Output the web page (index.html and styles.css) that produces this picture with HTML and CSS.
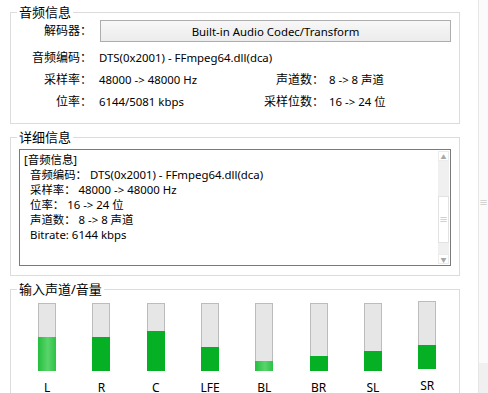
FILE: index.html
```html
<!DOCTYPE html>
<html>
<head>
    <meta charset="utf-8" />
    <title>音频信息</title>
    <link rel="stylesheet" href="styles.css">
</head>
<body>
    <div class="app">
        <div class="main">
            <fieldset class="grp info">
                <legend>音频信息</legend>
                <div class="kv">
                    <span class="k top">解码器：</span>
                    <button class="btn" type="button">Built-in Audio Codec/Transform</button>
                    <span class="k">音频编码：</span>
                    <span class="v wide">DTS(0x2001) - FFmpeg64.dll(dca)</span>
                    <span class="k">采样率：</span>
                    <span class="v">48000 -&gt; 48000 Hz</span>
                    <span class="k2">声道数：</span>
                    <span class="v2">8 -&gt; 8 声道</span>
                    <span class="k">位率：</span>
                    <span class="v">6144/5081 kbps</span>
                    <span class="k2">采样位数：</span>
                    <span class="v2">16 -&gt; 24 位</span>
                </div>
            </fieldset>

            <fieldset class="grp detail">
                <legend>详细信息</legend>
                <div class="memo">
                    <div class="memo-text">
                        <div>[音频信息]</div>
                        <div class="in">音频编码： DTS(0x2001) - FFmpeg64.dll(dca)</div>
                        <div class="in">采样率： 48000 -&gt; 48000 Hz</div>
                        <div class="in">位率： 16 -&gt; 24 位</div>
                        <div class="in">声道数： 8 -&gt; 8 声道</div>
                        <div class="in">Bitrate: 6144 kbps</div>
                    </div>
                    <div class="sb">
                        <span class="sb-arr">&#9650;</span>
                        <span class="sb-track t1"></span>
                        <span class="sb-thumb">&#8801;</span>
                        <span class="sb-track"></span>
                        <span class="sb-arr">&#9660;</span>
                    </div>
                </div>
            </fieldset>

            <fieldset class="grp levels">
                <legend>输入声道/音量</legend>
                <div class="chs">
                    <div class="ch"><div class="bar"><div class="fill lit" style="height:34px"></div></div><span>L</span></div>
                    <div class="ch"><div class="bar"><div class="fill" style="height:34px"></div></div><span>R</span></div>
                    <div class="ch"><div class="bar"><div class="fill" style="height:40px"></div></div><span>C</span></div>
                    <div class="ch"><div class="bar"><div class="fill" style="height:24px"></div></div><span>LFE</span></div>
                    <div class="ch"><div class="bar"><div class="fill lit" style="height:10px"></div></div><span>BL</span></div>
                    <div class="ch"><div class="bar"><div class="fill" style="height:15px"></div></div><span>BR</span></div>
                    <div class="ch"><div class="bar"><div class="fill" style="height:20px"></div></div><span>SL</span></div>
                    <div class="ch up"><div class="bar"><div class="fill" style="height:24px"></div></div><span>SR</span></div>
                </div>
            </fieldset>
        </div>
        <div class="side">
            <span class="grip">&#8801;</span>
            <span class="side-foot"></span>
        </div>
    </div>
</body>
</html>
```

FILE: styles.css
```css
html, body { margin: 0; background: #fff; }
body { font: 11.4px "Noto Sans", "Noto Sans CJK SC", sans-serif; color: #000; width: 488px; height: 393px; overflow: hidden; }

.app { display: flex; height: 393px; }
.main { width: 482px; padding-top: 4px; }
.side { flex: 1; border-left: 1px solid #e6e6e6; background: #fbfbfb; display: flex; flex-direction: column; align-items: center; }
.grip { margin-top: 198px; color: #b8b8b8; font-size: 9px; line-height: 10px; }
.side-foot { margin-top: auto; height: 30px; align-self: stretch; background: #f0f0f0; }

.grp { margin: 0 0 0 10px; width: 450px; box-sizing: border-box; border: 1px solid #dcdcdc; padding: 0; min-width: 0; }
.grp legend { margin-left: 6px; padding: 0 2px; font-size: 13px; line-height: 16px; }
.detail, .levels { margin-top: 5px; }

/* 音频信息 */
.kv { display: grid; grid-template-columns: 81px 158px 74px 1fr; padding: 0 0 10px; line-height: 22px; }
.k, .k2 { text-align: right; white-space: nowrap; font-size: 12px; }
.k.top { align-self: start; }
.v { padding-left: 7px; white-space: nowrap; }
.v2 { padding-left: 5px; white-space: nowrap; }
.wide { grid-column: 2 / 5; }
.btn { grid-column: 2 / 5; height: 22px; margin: 0 0 5px 8px; width: 351px; border: 1px solid #adadad; background: linear-gradient(#f7f7f7, #ececec); font: inherit; color: #000; padding: 0; }

/* 详细信息 */
.memo { display: flex; margin: 4px 8px 9px; height: 117px; box-sizing: border-box; border: 1px solid #7a7a7a; background: #fff; }
.memo-text { flex: 1; padding: 2px 0 0 4px; line-height: 15px; white-space: nowrap; }
.memo-text .in { padding-left: 6px; }
.sb { width: 11px; margin: 1px 1px 1px 0; display: flex; flex-direction: column; }
.sb-arr { height: 10px; font-size: 6px; line-height: 10px; text-align: center; color: #a8a8a8; border: 1px solid #ececec; box-sizing: border-box; }
.sb-track { flex: 1; background: #f0f0f0; }
.sb-track.t1 { flex: 3; }
.sb-thumb { height: 47px; border: 1px solid #e2e2e2; box-sizing: border-box; background: #fff; color: #b0b0b0; font-size: 9px; display: flex; align-items: center; justify-content: center; }

/* 输入声道/音量 */
.chs { display: grid; grid-template-columns: repeat(8, 54.3px); padding: 6px 0 0 9px; }
.ch { display: flex; flex-direction: column; align-items: center; }
.ch.up { margin-top: -2px; }
.bar { width: 18px; height: 68px; box-sizing: border-box; border: 1px solid #bcbcbc; background: #e6e6e6; display: flex; flex-direction: column; justify-content: flex-end; }
.fill { background: #06b025; margin: 0 -1px -1px; }
.fill.lit { background: linear-gradient(90deg, #23bf3d, #5ad46c 55%, #2cc244); }
.ch span { margin-top: 11px; line-height: 12px; font-size: 12px; }
```
